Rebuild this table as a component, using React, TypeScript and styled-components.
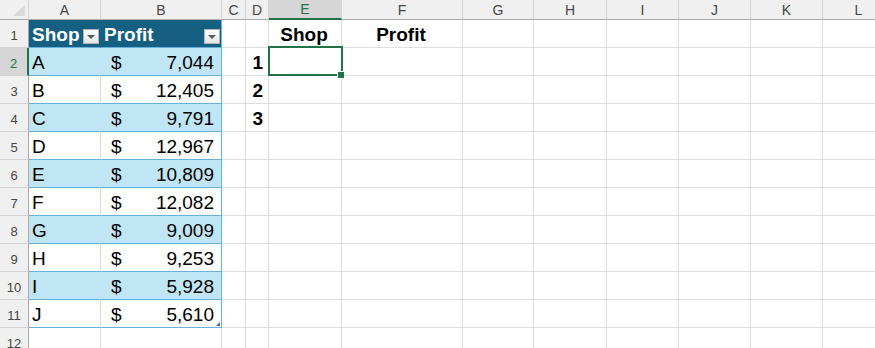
import React from 'react';
import styled, { createGlobalStyle, css } from 'styled-components';

const GlobalStyle = createGlobalStyle`
  html, body {
    margin: 0;
    padding: 0;
    background: #ffffff;
    overflow: hidden;
  }
  body {
    font-family: 'Liberation Sans', Arial, sans-serif;
  }
`;

const colors = {
  grid: '#dedede',
  headBg: '#f0f0f0',
  headLine: '#d3d3d3',
  headEdge: '#a9a9a9',
  headText: '#454545',
  selHeadBg: '#d6d6d6',
  green: '#217346',
  tableHead: '#156082',
  band: '#c0e6f5',
  tableLine: '#66b2dc',
};

const columns = ['A', 'B', 'C', 'D', 'E', 'F', 'G', 'H', 'I', 'J', 'K', 'L'];

const rows = [
  { shop: 'A', profit: '7,044' },
  { shop: 'B', profit: '12,405' },
  { shop: 'C', profit: '9,791' },
  { shop: 'D', profit: '12,967' },
  { shop: 'E', profit: '10,809' },
  { shop: 'F', profit: '12,082' },
  { shop: 'G', profit: '9,009' },
  { shop: 'H', profit: '9,253' },
  { shop: 'I', profit: '5,928' },
  { shop: 'J', profit: '5,610' },
];

const Sheet = styled.div`
  display: grid;
  grid-template-columns: 29px 72px 121px 24px 23px 73px 121px 71px 73px 72px 72px 72px 72px;
  grid-template-rows: 20px repeat(12, 28px);
  width: 875px;
  height: 348px;
  overflow: hidden;
`;

const Corner = styled.div`
  display: flex;
  justify-content: flex-end;
  align-items: flex-end;
  padding: 0 3px 3px 0;
  box-sizing: border-box;
  background: ${colors.headBg};
  border-right: 1px solid ${colors.headLine};
  border-bottom: 1px solid ${colors.headEdge};
`;

const CornerMark = styled.span`
  width: 0;
  height: 0;
  border-left: 12px solid transparent;
  border-bottom: 11px solid #d9d9d9;
`;

const ColHead = styled.div<{ $selected?: boolean }>`
  display: flex;
  align-items: center;
  justify-content: center;
  box-sizing: border-box;
  font-size: 14px;
  color: ${colors.headText};
  background: ${colors.headBg};
  border-right: 1px solid ${colors.headLine};
  border-bottom: 1px solid ${colors.headEdge};

  ${(p) =>
    p.$selected &&
    css`
      background: ${colors.selHeadBg};
      color: ${colors.green};
      border-bottom: 2px solid ${colors.green};
    `}
`;

const RowHead = styled.div<{ $selected?: boolean }>`
  display: flex;
  align-items: flex-end;
  justify-content: center;
  padding-bottom: 4px;
  box-sizing: border-box;
  font-size: 13px;
  line-height: 15px;
  color: ${colors.headText};
  background: ${colors.headBg};
  border-right: 1px solid ${colors.headEdge};
  border-bottom: 1px solid ${colors.headLine};

  ${(p) =>
    p.$selected &&
    css`
      background: ${colors.selHeadBg};
      color: ${colors.green};
      border-right: 2px solid ${colors.green};
    `}
`;

const Cell = styled.div<{ $align?: 'left' | 'center' | 'right'; $bold?: boolean }>`
  position: relative;
  display: flex;
  align-items: flex-end;
  justify-content: ${(p) =>
    p.$align === 'center' ? 'center' : p.$align === 'right' ? 'flex-end' : 'flex-start'};
  padding: 0 5px 1px 3px;
  box-sizing: border-box;
  font-size: 19px;
  line-height: 22px;
  font-weight: ${(p) => (p.$bold ? 700 : 400)};
  color: #000;
  border-right: 1px solid ${colors.grid};
  border-bottom: 1px solid ${colors.grid};
`;

// active cell outline with its fill handle
const ActiveCell = styled(Cell)`
  &::after {
    content: '';
    position: absolute;
    top: -2px;
    left: -1px;
    right: -2px;
    bottom: -1px;
    border: 2px solid ${colors.green};
    z-index: 2;
  }
  &::before {
    content: '';
    position: absolute;
    right: -4px;
    bottom: -4px;
    width: 6px;
    height: 6px;
    background: ${colors.green};
    border: 1px solid #fff;
    z-index: 3;
  }
`;

const TableHeadCell = styled(Cell)<{ $edge?: boolean }>`
  justify-content: space-between;
  align-items: flex-end;
  padding: 0 1px 1px 3px;
  font-weight: 700;
  color: #fff;
  background: ${colors.tableHead};
  border-bottom-color: ${colors.tableLine};
  border-right-color: ${(p) => (p.$edge ? colors.tableLine : colors.tableHead)};
`;

const TableCell = styled(Cell)<{ $band?: boolean; $edge?: boolean; $corner?: boolean }>`
  background: ${(p) => (p.$band ? colors.band : '#fff')};
  border-bottom-color: ${colors.tableLine};
  border-right-color: ${(p) => (p.$edge ? colors.tableLine : p.$band ? colors.band : colors.grid)};

  ${(p) =>
    p.$corner &&
    css`
      &::after {
        content: '';
        position: absolute;
        right: 1px;
        bottom: 1px;
        width: 0;
        height: 0;
        border-left: 4px solid transparent;
        border-bottom: 4px solid #4a64b8;
      }
    `}
`;

const MoneyCell = styled(TableCell)`
  justify-content: space-between;
  padding: 0 7px 1px 10px;
`;

const FilterButton = styled.span`
  display: flex;
  align-items: center;
  justify-content: center;
  width: 16px;
  height: 15px;
  margin-bottom: 2px;
  box-sizing: border-box;
  border: 1px solid #b4b4b4;
  background: linear-gradient(#ffffff, #e4e4e4);
`;

const FilterArrow = styled.span`
  width: 0;
  height: 0;
  border-left: 4px solid transparent;
  border-right: 4px solid transparent;
  border-top: 4px solid #5a5a5a;
  margin-top: 1px;
`;

const Filter = () => (
  <FilterButton>
    <FilterArrow />
  </FilterButton>
);

const emptyCells = (from: number, key: string) =>
  columns.slice(from).map((c) => <Cell key={`${key}-${c}`} />);

export default function App() {
  return (
    <>
      <GlobalStyle />
      <Sheet>
        <Corner>
          <CornerMark />
        </Corner>
        {columns.map((c) => (
          <ColHead key={c} $selected={c === 'E'}>
            {c}
          </ColHead>
        ))}

        <RowHead>1</RowHead>
        <TableHeadCell>
          <span>Shop</span>
          <Filter />
        </TableHeadCell>
        <TableHeadCell $edge>
          <span>Profit</span>
          <Filter />
        </TableHeadCell>
        <Cell />
        <Cell />
        <Cell $align="center" $bold>
          Shop
        </Cell>
        <Cell $align="center" $bold>
          Profit
        </Cell>
        {emptyCells(6, 'r1')}

        {rows.map((r, i) => {
          const n = i + 2;
          const band = i % 2 === 0;
          const last = i === rows.length - 1;
          return (
            <React.Fragment key={r.shop}>
              <RowHead $selected={n === 2}>{n}</RowHead>
              <TableCell $band={band}>{r.shop}</TableCell>
              <MoneyCell $band={band} $edge $corner={last}>
                <span>$</span>
                <span>{r.profit}</span>
              </MoneyCell>
              <Cell />
              <Cell $align="right" $bold>
                {i < 3 ? i + 1 : ''}
              </Cell>
              {n === 2 ? <ActiveCell /> : <Cell />}
              {emptyCells(5, `r${n}`)}
            </React.Fragment>
          );
        })}

        <RowHead>12</RowHead>
        {emptyCells(0, 'r12')}
      </Sheet>
    </>
  );
}
